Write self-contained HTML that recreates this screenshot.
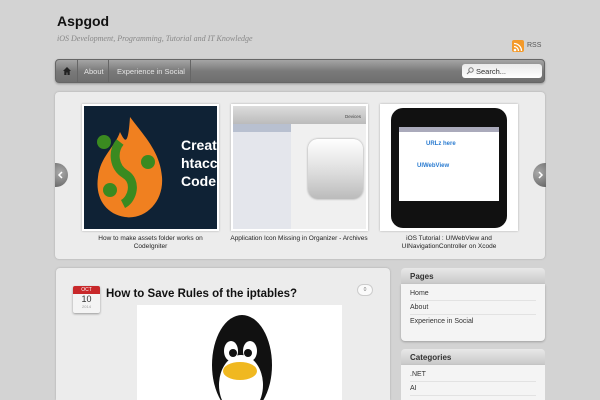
<!DOCTYPE html>
<html style="width:600px;height:400px;overflow:hidden"><head><meta charset="utf-8"><style>
*{margin:0;padding:0;box-sizing:border-box}
body{width:600px;height:400px;overflow:hidden;background:#d3d3d3;font-family:"Liberation Sans",sans-serif;position:relative}
.a{position:absolute}
.nav{left:55px;top:59px;width:490px;height:24px;border-radius:4px;background:linear-gradient(#a5a5a5,#7a7a7a 50%,#6e6e6e);border:1px solid #666;box-shadow:0 1px 2px rgba(0,0,0,.3)}
.sep{top:0;width:1px;height:22px;background:#8a8a8a;border-left:1px solid #666}
.nav span{position:absolute;top:7px;font-size:7.5px;color:#e4e4e4}
.box{background:#ececec;border-radius:4px;box-shadow:0 0 2px rgba(0,0,0,.2)}
.cap{font-size:6.5px;color:#222;text-align:center;line-height:8px}
.arrow{width:13px;height:24px;background:radial-gradient(circle at 40% 40%,#aaa,#666);border-radius:12px}
.wh{background:linear-gradient(#e8e8e8,#c8c8c8);height:16px;border-radius:4px 4px 0 0;font-size:8px;font-weight:bold;color:#333;padding:4px 9px}
.wb{background:#f4f4f4;border-radius:0 0 4px 4px;box-shadow:0 1px 2px rgba(0,0,0,.25);padding:3px 9px}
.wb div{font-size:7px;color:#333;height:14px;line-height:14px;border-bottom:1px solid #e2e2e2}
</style></head><body>
<div class="a" style="left:57px;top:13px;font-size:14px;font-weight:bold;color:#111">Aspgod</div>
<div class="a" style="left:57px;top:34px;font-size:8px;font-style:italic;color:#888;font-family:'Liberation Serif',serif">iOS Development, Programming, Tutorial and IT Knowledge</div>
<div class="a" style="left:512px;top:40px;width:12px;height:12px;background:#f39a2b;border-radius:2px"><svg width="12" height="12"><circle cx="3" cy="9" r="1.3" fill="#fff"/><path d="M2 5.5a4.5 4.5 0 0 1 4.5 4.5M2 2.5a7.5 7.5 0 0 1 7.5 7.5" stroke="#fff" stroke-width="1.3" fill="none"/></svg></div>
<div class="a" style="left:527px;top:42px;font-size:7px;color:#555">RSS</div>
<div class="a nav">
<svg class="a" style="left:6px;top:6px" width="10" height="10"><path d="M5 1L1 5h1.3v4h2.2V6.5h1V9h2.2V5H9z" fill="#222"/></svg>
<div class="a sep" style="left:21px"></div><span style="left:28px">About</span>
<div class="a sep" style="left:52px"></div><span style="left:61px">Experience in Social</span>
<div class="a sep" style="left:134px"></div>
<div class="a" style="left:406px;top:4px;width:80px;height:14px;background:linear-gradient(#e9e9e9,#fff);border-radius:3px;font-size:7.5px;color:#333;padding:3px 0 0 14px">Search...<svg class="a" style="left:4px;top:3px" width="8" height="8"><circle cx="5" cy="3" r="2.2" stroke="#777" fill="none"/><path d="M3.4 4.6L1 7" stroke="#777"/></svg></div>
</div>
<div class="a box" style="left:55px;top:92px;width:490px;height:167px"></div>
<div class="a" style="left:82px;top:104px;width:137px;height:127px;background:#fff;padding:2px;box-shadow:0 0 2px #aaa"><div style="width:100%;height:100%;background:#0f2235;position:relative;overflow:hidden">
<svg class="a" style="left:6px;top:6px" width="80" height="110"><path d="M40 5C55 25 70 40 72 65C74 90 55 108 35 105C15 102 5 85 8 65C10 45 25 35 30 20C35 30 38 35 40 5Z" fill="#f08020"/><path d="M30 30c-8 10-6 25 5 32c12 7 8 25-2 30" stroke="#3a8a20" stroke-width="9" fill="none"/><circle cx="14" cy="30" r="7" fill="#3a8a20"/><circle cx="58" cy="50" r="7" fill="#3a8a20"/><circle cx="20" cy="78" r="7" fill="#3a8a20"/></svg>
<div class="a" style="left:97px;top:30px;color:#fff;font-size:14px;font-weight:bold;line-height:18px">Creat<br>htacc<br>Code</div></div></div>
<div class="a" style="left:231px;top:104px;width:137px;height:127px;background:#fff;padding:2px;box-shadow:0 0 2px #aaa"><div style="width:100%;height:100%;background:#f0f0f0;position:relative;overflow:hidden">
<div class="a" style="left:0;top:0;width:100%;height:18px;background:linear-gradient(#ddd,#bbb)"></div>
<div class="a" style="left:0;top:18px;width:58px;height:110px;background:#e4e6ec"></div>
<div class="a" style="left:0;top:18px;width:58px;height:8px;background:#b8c0d0"></div>
<div class="a" style="left:75px;top:33px;width:55px;height:60px;border-radius:10px;background:linear-gradient(#fff,#ddd 55%,#bbb);box-shadow:0 0 2px #999"></div>
<div class="a" style="left:112px;top:8px;font-size:4.5px;color:#444">Devices</div></div></div>
<div class="a" style="left:380px;top:104px;width:138px;height:127px;background:#fff;padding:2px;box-shadow:0 0 2px #aaa"><div style="position:relative;width:100%;height:100%">
<div class="a" style="left:9px;top:2px;width:116px;height:120px;background:#111;border-radius:12px"></div>
<div class="a" style="left:17px;top:21px;width:100px;height:74px;background:#fff;border-top:5px solid #aab"></div>
<div class="a" style="left:44px;top:35px;font-size:6px;font-weight:bold;color:#2a7bd0">URLz here</div>
<div class="a" style="left:35px;top:57px;font-size:6px;font-weight:bold;color:#2a7bd0">UIWebView</div></div></div>
<div class="a cap" style="left:82px;top:235px;width:137px">How to make assets folder works on CodeIgniter</div>
<div class="a cap" style="left:225px;top:235px;width:148px">Application Icon Missing in Organizer - Archives</div>
<div class="a cap" style="left:380px;top:235px;width:138px">iOS Tutorial : UIWebView and UINavigationController on Xcode</div>
<div class="a arrow" style="left:55px;top:163px;border-radius:0 12px 12px 0"><svg width="13" height="24"><path d="M7 9l-3 3 3 3" stroke="#fff" stroke-width="1.5" fill="none"/></svg></div>
<div class="a arrow" style="left:533px;top:163px;border-radius:12px 0 0 12px"><svg width="13" height="24"><path d="M6 9l3 3-3 3" stroke="#fff" stroke-width="1.5" fill="none"/></svg></div>
<div class="a box" style="left:56px;top:268px;width:334px;height:132px;border-radius:4px 4px 0 0"></div>
<div class="a" style="left:73px;top:286px;width:27px;height:27px;background:#f4f4f4;border-radius:2px;box-shadow:0 1px 2px #999;text-align:center">
<div style="background:#c8282a;color:#fff;font-size:5px;height:8px;line-height:8px;border-radius:2px 2px 0 0">OCT</div>
<div style="font-size:9px;color:#333;line-height:10px">10</div><div style="font-size:4px;color:#999">2014</div></div>
<div class="a" style="left:106px;top:288px;font-size:11.5px;font-weight:bold;color:#111">How to Save Rules of the iptables?</div>
<div class="a" style="left:357px;top:284px;width:16px;height:12px;background:#fafafa;border:1px solid #ccc;border-radius:7px;font-size:5px;color:#777;text-align:center;line-height:10px">0</div>
<div class="a" style="left:137px;top:305px;width:205px;height:95px;background:#fff;overflow:hidden">
<svg class="a" style="left:70px;top:10px" width="70" height="85"><ellipse cx="35" cy="50" rx="30" ry="50" fill="#111"/><ellipse cx="34" cy="70" rx="22" ry="30" fill="#fff"/><ellipse cx="24" cy="36" rx="7" ry="10" fill="#fff"/><ellipse cx="43" cy="36" rx="7" ry="10" fill="#fff"/><circle cx="26" cy="38" r="4" fill="#111"/><circle cx="41" cy="38" r="4" fill="#111"/><ellipse cx="33" cy="56" rx="17" ry="9" fill="#f0b820"/></svg></div>
<div class="a" style="left:401px;top:268px;width:144px"><div class="wh">Pages</div><div class="wb" style="height:57px"><div>Home</div><div>About</div><div style="border:0">Experience in Social</div></div></div>
<div class="a" style="left:401px;top:349px;width:144px;height:51px;overflow:hidden"><div class="wh">Categories</div><div class="wb" style="height:35px;border-radius:0"><div>.NET</div><div>AI</div></div></div>
</body></html>
